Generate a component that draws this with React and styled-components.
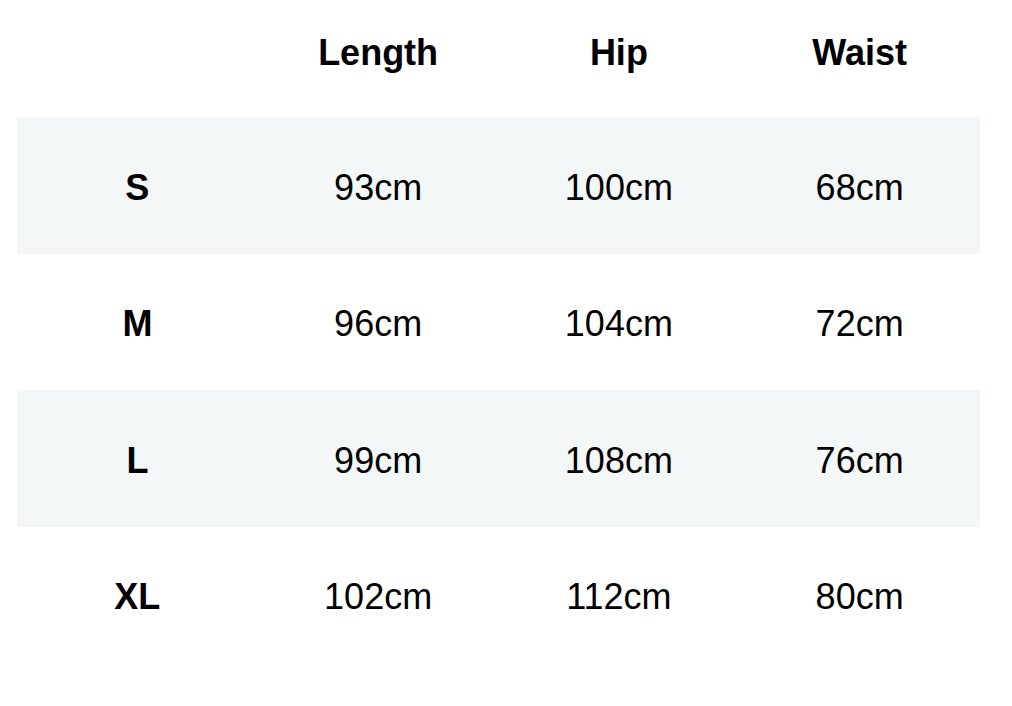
import styled, { createGlobalStyle } from 'styled-components'

const GlobalStyle = createGlobalStyle`
  html, body {
    margin: 0;
    padding: 0;
    background: #ffffff;
  }
  body {
    font-family: "Liberation Sans", Arial, Helvetica, sans-serif;
    color: #000;
  }
`

const Page = styled.main`
  width: 1012px;
  height: 706px;
  padding: 0 32px 0 17px;
  box-sizing: border-box;
`

const Table = styled.div`
  display: flex;
  flex-direction: column;
`

const HeadRow = styled.div`
  display: grid;
  grid-template-columns: repeat(4, 1fr);
  height: 104px;
  margin-bottom: 13px;
`

const Row = styled.div`
  display: grid;
  grid-template-columns: repeat(4, 1fr);
  height: 136.5px;
  background: ${({ $striped }) => ($striped ? '#f4f7f8' : 'transparent')};
`

const Cell = styled.div`
  display: flex;
  align-items: center;
  justify-content: center;
  font-size: 36px;
  font-weight: ${({ $bold }) => ($bold ? 700 : 400)};
  padding-top: ${({ $head }) => ($head ? '1px' : '5px')};
`

const columns = ['Length', 'Hip', 'Waist']

const sizes = [
  { size: 'S', values: ['93cm', '100cm', '68cm'] },
  { size: 'M', values: ['96cm', '104cm', '72cm'] },
  { size: 'L', values: ['99cm', '108cm', '76cm'] },
  { size: 'XL', values: ['102cm', '112cm', '80cm'] },
]

export default function App() {
  return (
    <>
      <GlobalStyle />
      <Page>
        <Table>
          <HeadRow>
            <Cell $head />
            {columns.map((c) => (
              <Cell key={c} $head $bold>
                {c}
              </Cell>
            ))}
          </HeadRow>
          {sizes.map((row, i) => (
            <Row key={row.size} $striped={i % 2 === 0}>
              <Cell $bold>{row.size}</Cell>
              {row.values.map((v, j) => (
                <Cell key={j}>{v}</Cell>
              ))}
            </Row>
          ))}
        </Table>
      </Page>
    </>
  )
}
